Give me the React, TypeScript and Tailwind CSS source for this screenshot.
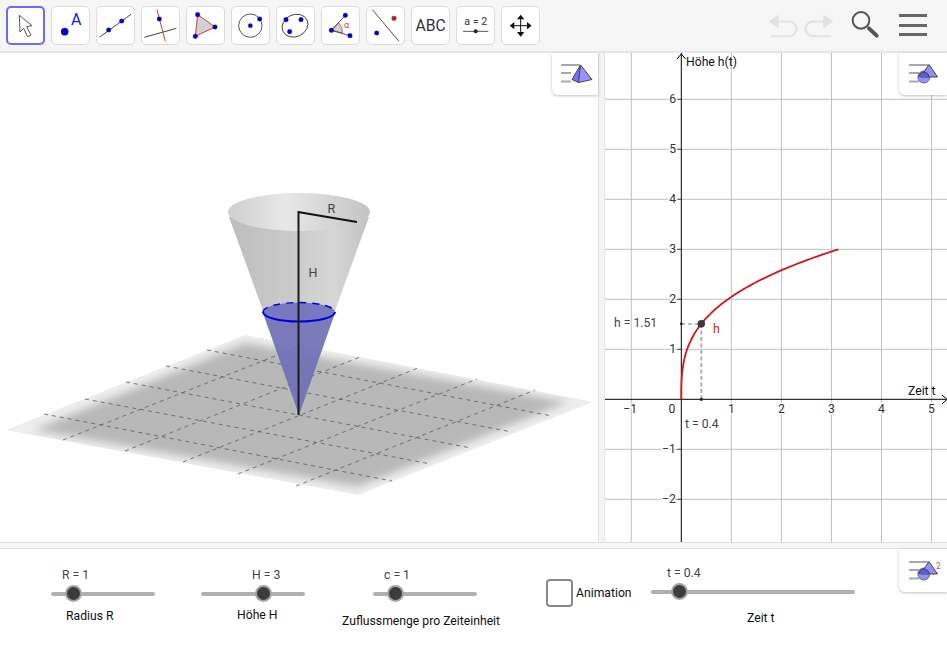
import React from "react";

const BLUE = "#0000dc";
const font = "Roboto, 'Liberation Sans', sans-serif";

function Dot({ x, y, r = 7, c = BLUE }: { x: number; y: number; r?: number; c?: string }) {
  return <circle cx={x} cy={y} r={r} fill={c} stroke="#222" strokeWidth={0.8} />;
}

function ToolBtn({ vx, vy = 19, active, children }: { vx: number; vy?: number; active?: boolean; children: React.ReactNode }) {
  return (
    <div className={"w-[39px] h-[39px] rounded-[5px] bg-white shrink-0 border-solid box-border " + (active ? "border-2 border-[#6a6aff]" : "border border-[#dcdcdc]")}>
      <svg viewBox={`${vx} ${vy} 117 117`} className={"block w-[39px] h-[39px] " + (active ? "-m-[2px]" : "-m-[1px]")}>
        {children}
      </svg>
    </div>
  );
}

function Toolbar() {
  return (
    <div className="h-[53px] bg-[#f6f6f6] border-b-2 border-[#e6e6e6] box-border flex items-center pl-[5.5px] pr-[20px] pb-[1px]">
      <div className="flex gap-[6px]">
        <ToolBtn vx={17} active>
          <path d="M57 47 L95 78 L79 81 L92 106 L82 111 L70 86 L59 97 Z" fill="#fff" stroke="#555" strokeWidth={3} strokeLinejoin="round" />
        </ToolBtn>
        <ToolBtn vx={152}>
          <circle cx={193} cy={96} r={11} fill={BLUE} stroke="#111" strokeWidth={1} />
          <text x={228} y={77} textAnchor="middle" fontSize={48} fill="#1414ff" fontFamily={font}>A</text>
        </ToolBtn>
        <ToolBtn vx={287}>
          <line x1={298} y1={112} x2={392} y2={44} stroke="#444" strokeWidth={3} />
          <Dot x={325} y={91} />
          <Dot x={364} y={64} />
        </ToolBtn>
        <ToolBtn vx={422}>
          <line x1={432} y1={113} x2={528} y2={86} stroke="#444" strokeWidth={3} />
          <line x1={470} y1={30} x2={495} y2={125} stroke="#d83a3a" strokeWidth={3} />
          <Dot x={477} y={58} />
        </ToolBtn>
        <ToolBtn vx={557}>
          <polygon points="592,45 644,82 585,110" fill="#d2d2d2" stroke="#d83a3a" strokeWidth={3} />
          <Dot x={592} y={45} />
          <Dot x={644} y={82} />
          <Dot x={585} y={110} />
        </ToolBtn>
        <ToolBtn vx={692}>
          <circle cx={750} cy={78} r={35} fill="none" stroke="#333" strokeWidth={2.5} />
          <Dot x={750} y={78} r={6.5} />
          <Dot x={778} y={58} />
        </ToolBtn>
        <ToolBtn vx={827}>
          <ellipse cx={884} cy={78} rx={40} ry={33} transform="rotate(-25 884 78)" fill="none" stroke="#333" strokeWidth={2.5} />
          <Dot x={857} y={60} />
          <Dot x={902} y={60} />
          <Dot x={868} y={96} />
        </ToolBtn>
        <ToolBtn vx={31}>
          <path d="M62 92 L84 70 A34 34 0 0 1 95 100 Z" fill="#d2d2d2" stroke="#d83a3a" strokeWidth={2.5} />
          <line x1={62} y1={92} x2={104} y2={47} stroke="#333" strokeWidth={2.5} />
          <line x1={62} y1={92} x2={118} y2={108} stroke="#333" strokeWidth={2.5} />
          <text x={108} y={86} textAnchor="middle" fontSize={27} fill="#d83a3a" fontFamily={font}>α</text>
          <Dot x={62} y={92} />
          <Dot x={104} y={47} />
          <Dot x={118} y={108} />
        </ToolBtn>
        <ToolBtn vx={166}>
          <line x1={185} y1={30} x2={265} y2={125} stroke="#333" strokeWidth={2.5} />
          <Dot x={198} y={100} />
          <Dot x={250} y={56} c="#d81818" />
        </ToolBtn>
        <ToolBtn vx={301}>
          <text x={360} y={94} textAnchor="middle" fontSize={47} fill="#333" fontFamily={font}>ABC</text>
        </ToolBtn>
        <ToolBtn vx={436}>
          <text x={495} y={75} textAnchor="middle" fontSize={32} fill="#333" fontFamily={font}>a = 2</text>
          <line x1={457} y1={95} x2={533} y2={95} stroke="#555" strokeWidth={3} />
          <circle cx={495} cy={95} r={6} fill="#222" />
        </ToolBtn>
        <ToolBtn vx={571}>
          <line x1={630} y1={52} x2={630} y2={104} stroke="#111" strokeWidth={3} />
          <line x1={604} y1={78} x2={656} y2={78} stroke="#111" strokeWidth={3} />
          <polygon points="630,45 619,59 641,59" fill="#111" />
          <polygon points="630,111 619,97 641,97" fill="#111" />
          <polygon points="597,78 611,67 611,89" fill="#111" />
          <polygon points="663,78 649,67 649,89" fill="#111" />
        </ToolBtn>
      </div>
      <div className="ml-auto flex items-center">
        <svg viewBox="80 40 200 80" className="block w-[67px] h-[27px]">
          <path d="M115 68 H146 A20 20 0 0 1 146 112 H92" fill="none" stroke="#e2e2e2" strokeWidth={6} />
          <polygon points="85,68 115,47 115,89" fill="#e2e2e2" />
          <path d="M248 68 H217 A20 20 0 0 0 217 112 H272" fill="none" stroke="#e2e2e2" strokeWidth={6} />
          <polygon points="278,68 248,47 248,89" fill="#e2e2e2" />
        </svg>
        <svg viewBox="335 38 90 90" className="block w-[30px] h-[30px] ml-[17px]">
          <circle cx={365} cy={69} r={25} fill="none" stroke="#555" strokeWidth={6} />
          <line x1={389} y1={93} x2={412} y2={115} stroke="#555" strokeWidth={12} strokeLinecap="round" />
        </svg>
        <div className="ml-[18px] w-[28px] flex flex-col gap-[6.5px]">
          <div className="h-[3px] bg-[#666]" />
          <div className="h-[3px] bg-[#666]" />
          <div className="h-[3px] bg-[#666]" />
        </div>
      </div>
    </div>
  );
}

function StyleBar({ kind }: { kind: "3d" | "2d" | "alg" }) {
  const size = kind === "3d" ? "w-[46px] h-[42px]" : kind === "2d" ? "w-[48px] h-[42px]" : "w-[48px] h-[43px]";
  return (
    <div className={"absolute top-0 right-0 bg-white rounded-bl-[6px] shadow-[0_1px_3px_rgba(0,0,0,0.25)] flex items-center justify-center " + size}>
      <svg viewBox="0 0 40 28" className="block w-[40px] h-[28px]">
        <line x1={6} y1={5} x2={25} y2={5} stroke="#a8a8a8" strokeWidth={2} />
        <line x1={6} y1={13} x2={16} y2={13} stroke="#a8a8a8" strokeWidth={2} />
        <line x1={6} y1={21.5} x2={16} y2={21.5} stroke="#a8a8a8" strokeWidth={2} />
        {kind === "3d" ? (
          <>
            <polygon points="25.5,5 17,19.5 23.5,22.5" fill="#7272ff" stroke="#444" strokeWidth={1} strokeLinejoin="round" />
            <polygon points="25.5,5 37,19.5 23.5,22.5" fill="#9494ff" stroke="#444" strokeWidth={1} strokeLinejoin="round" />
          </>
        ) : (
          <>
            <circle cx={20.8} cy={17} r={6} fill="#9090ff" stroke="#555" strokeWidth={0.8} />
            <polygon points="26,4.5 34.5,17 17.5,17" fill="#9090ff" stroke="#444" strokeWidth={1} strokeLinejoin="round" />
            <path d="M16 17 A5 5 0 0 1 26 17" fill="#5c5cd8" stroke="#333" strokeWidth={0.8} />
            {kind === "alg" && <text x={33} y={12} fontSize={8.5} fill="#777" fontFamily={font}>2</text>}
          </>
        )}
      </svg>
    </div>
  );
}

const pl1: [number, number, number, number][] = [
  [44, 414, 392, 481], [85, 399, 431, 464], [126, 382, 471, 448], [166, 366, 512, 432], [207, 350, 552, 416],
];
const pl2: [number, number, number, number][] = [
  [63, 440, 303, 345], [125, 451, 360, 357], [183, 462, 418, 368], [238, 474, 477, 379], [296, 486, 535, 390],
];

function View3D() {
  return (
    <svg viewBox="0 0 598 489" className="block w-full h-full">
      <defs>
        <clipPath id="plane"><polygon points="6,377 245,282 593,349 358,442" /></clipPath>
        <filter id="soft" x="-20%" y="-20%" width="140%" height="140%"><feGaussianBlur stdDeviation="4.5" /></filter>
        <linearGradient id="rim" x1="0" x2="1" y1="0" y2="0">
          <stop offset="0" stopColor="#cfcfcf" />
          <stop offset="0.4" stopColor="#e8e8e8" />
          <stop offset="1" stopColor="#c4c4c4" />
        </linearGradient>
        <linearGradient id="body" x1="0" x2="1" y1="0" y2="0">
          <stop offset="0" stopColor="#bdbdbd" />
          <stop offset="0.45" stopColor="#cbcbcb" />
          <stop offset="0.75" stopColor="#d6d6d6" />
          <stop offset="1" stopColor="#c2c2c2" />
        </linearGradient>
      </defs>
      <polygon points="6,377 245,282 593,349 358,442" fill="#eeeeee" />
      <g clipPath="url(#plane)">
        <polygon points="34,377 245,290 568,349 358,434" fill="#b8b8b8" filter="url(#soft)" />
      </g>
      <g stroke="#5a5a5a" strokeWidth={0.8} strokeDasharray="4 4" fill="none">
        {pl1.map((l, i) => <line key={i} x1={l[0]} y1={l[1] - 53} x2={l[2]} y2={l[3] - 53} />)}
        {pl2.map((l, i) => <line key={i} x1={l[0]} y1={l[1] - 53} x2={l[2]} y2={l[3] - 53} />)}
      </g>
      <polygon points="229,164 369,164 333,263 265,263" fill="url(#body)" />
      <ellipse cx={299} cy={159} rx={71} ry={19} fill="url(#rim)" />
      <polygon points="264,263 334,263 299,362" fill="#7070b6" fillOpacity={0.92} />
      <ellipse cx={299} cy={259} rx={36} ry={9.5} fill="#7878c0" />
      <path d="M263 259 A36 9.5 0 0 1 335 259" fill="none" stroke="#0000d8" strokeWidth={1.5} strokeDasharray="7 6" />
      <path d="M263 259 A36 9.5 0 0 0 335 259" fill="none" stroke="#0000d8" strokeWidth={2} />
      <line x1={298.5} y1={158} x2={298.5} y2={362} stroke="#1a1a1a" strokeWidth={2} />
      <line x1={298} y1={159} x2={357} y2={169} stroke="#111" strokeWidth={2} />
      <text x={327.5} y={160} fontSize={12.5} fill="#444" fontFamily={font}>R</text>
      <text x={308.5} y={224} fontSize={12.5} fill="#444" fontFamily={font}>H</text>
    </svg>
  );
}

function Graph() {
  // coordinates local to this panel: left edge 605, top edge 53
  const X = (t: number) => 76.3 + t * 50.05;
  const Y = (v: number) => 346.3 - v * 50;
  const pts: string[] = [];
  for (let i = 0; i <= 200; i++) {
    const t = Math.PI * Math.pow(i / 200, 2.4);
    const v = 3 * Math.cbrt(t / Math.PI);
    pts.push(`${X(t).toFixed(2)},${Y(v).toFixed(2)}`);
  }
  const xs = [-1, 1, 2, 3, 4, 5];
  const ys = [6, 5, 4, 3, 2, 1, -1, -2];
  return (
    <svg viewBox="0 0 342 489" className="block w-full h-full">
      <g stroke="#c0c0c0" strokeWidth={1}>
        {xs.map((x) => <line key={x} x1={X(x)} y1={0} x2={X(x)} y2={489} />)}
        {ys.map((y) => <line key={y} x1={0} y1={Y(y)} x2={342} y2={Y(y)} />)}
      </g>
      <line x1={X(0)} y1={0} x2={X(0)} y2={489} stroke="#000" strokeWidth={1} />
      <line x1={0} y1={Y(0)} x2={341} y2={Y(0)} stroke="#000" strokeWidth={1} />
      <path d="M72 6 L76.3 1 L80.6 6" fill="none" stroke="#000" />
      <path d="M337 342 L342 346.3 L337 351" fill="none" stroke="#000" />
      <g stroke="#444">
        {ys.map((y) => <line key={y} x1={X(0) - 4} y1={Y(y)} x2={X(0)} y2={Y(y)} />)}
      </g>
      <g fontSize={12.2} fill="#333" fontFamily={font} textAnchor="middle" stroke="#fff" strokeWidth={2.5} style={{ paintOrder: "stroke" }}>
        {xs.map((x) => <text key={x} x={X(x) - (x < 0 ? 1 : 0)} y={360}>{x < 0 ? "\u2212" + -x : x}</text>)}
        {ys.map((y) => <text key={y} x={y < 0 ? 64 : 67.7} y={Y(y) + 4}>{y < 0 ? "\u2212" + -y : y}</text>)}
        <text x={67} y={360}>0</text>
      </g>
      <text x={81} y={13} fontSize={12.2} fill="#111" fontFamily={font}>Höhe h(t)</text>
      <text x={303} y={342} fontSize={12.2} fill="#111" fontFamily={font}>Zeit t</text>
      <line x1={96.3} y1={271} x2={96.3} y2={346} stroke="#a8a8a8" strokeWidth={1.8} strokeDasharray="4 2.5" />
      <line x1={76} y1={271} x2={96} y2={271} stroke="#777" strokeWidth={1} strokeDasharray="4 3" />
      <polyline points={pts.join(" ")} fill="none" stroke="#d01818" strokeWidth={1.8} />
      <circle cx={76.3} cy={270.8} r={1.4} fill="#222" />
      <circle cx={96.3} cy={346.3} r={1.6} fill="#222" />
      <circle cx={96.3} cy={270.8} r={3.5} fill="#3c3c3c" stroke="#222" strokeWidth={0.6} />
      <text x={108} y={280} fontSize={12.5} fill="#d01818" fontFamily={font}>h</text>
      <text x={9} y={274} fontSize={12.2} fill="#444" fontFamily={font}>h = 1.51</text>
      <text x={80} y={375} fontSize={12.2} fill="#444" fontFamily={font}>t = 0.4</text>
    </svg>
  );
}

function Slider({ pos, w = 104 }: { pos: number; w?: number }) {
  return (
    <div className="relative h-[4px] rounded-full bg-[#b0b0b0]" style={{ width: w }}>
      <div className="absolute top-[-7px] w-[17px] h-[17px] rounded-full bg-[#3c3c3c] border-[2.5px] border-[#a4a4a4] box-border" style={{ left: pos - 8.5 }} />
    </div>
  );
}

function Widget({ value, valuePad, label, labelPad, labelGap, pos, w = 104, className }: { value: string; valuePad: number; label: string; labelPad: number; labelGap: number; pos: number; w?: number; className: string }) {
  return (
    <div className={"flex flex-col shrink-0 " + className} style={{ width: w }}>
      <div className="h-[16px] text-[12.2px] leading-[16px] text-[#444] whitespace-nowrap" style={{ paddingLeft: valuePad }}>{value}</div>
      <div className="mt-[9px]"><Slider pos={pos} w={w} /></div>
      <div className="text-[12.2px] leading-[16px] text-[#111] whitespace-nowrap" style={{ marginTop: labelGap, marginLeft: labelPad }}>{label}</div>
    </div>
  );
}

export default function App() {
  return (
    <div className="w-[947px] h-[666px] overflow-hidden bg-white flex flex-col" style={{ fontFamily: font }}>
      <Toolbar />
      <div className="flex h-[489px]">
        <div className="relative w-[598px]">
          <View3D />
          <StyleBar kind="3d" />
        </div>
        <div className="w-[7px] bg-[#f4f4f4] border-x border-[#e4e4e4]" />
        <div className="relative w-[342px]">
          <Graph />
          <StyleBar kind="2d" />
        </div>
      </div>
      <div className="h-[7px] bg-[#f6f6f6] border-y border-[#e0e0e0] box-border" />
      <div className="relative flex-1 flex items-start pt-[18px]">
        <Widget className="ml-[51px]" value="R = 1" valuePad={11} label="Radius R" labelPad={15} labelGap={12} pos={22.5} />
        <Widget className="ml-[46px]" value="H = 3" valuePad={51} label="Höhe H" labelPad={36} labelGap={11} pos={62.5} />
        <Widget className="ml-[68px]" value="c = 1" valuePad={11} label="Zuflussmenge pro Zeiteinheit" labelPad={-31} labelGap={17} pos={22.5} />
        <div className="ml-[69px] mt-[12px] flex items-center gap-[3px] shrink-0">
          <div className="w-[27px] h-[28px] rounded-[4px] border-2 border-[#888] box-border bg-white" />
          <div className="w-[75px] text-[12.2px] leading-[16px] text-[#111]">Animation</div>
        </div>
        <Widget className="-mt-[2px]" value="t = 0.4" valuePad={16} label="Zeit t" labelPad={96} labelGap={16} pos={28} w={204} />
        <StyleBar kind="alg" />
      </div>
    </div>
  );
}
